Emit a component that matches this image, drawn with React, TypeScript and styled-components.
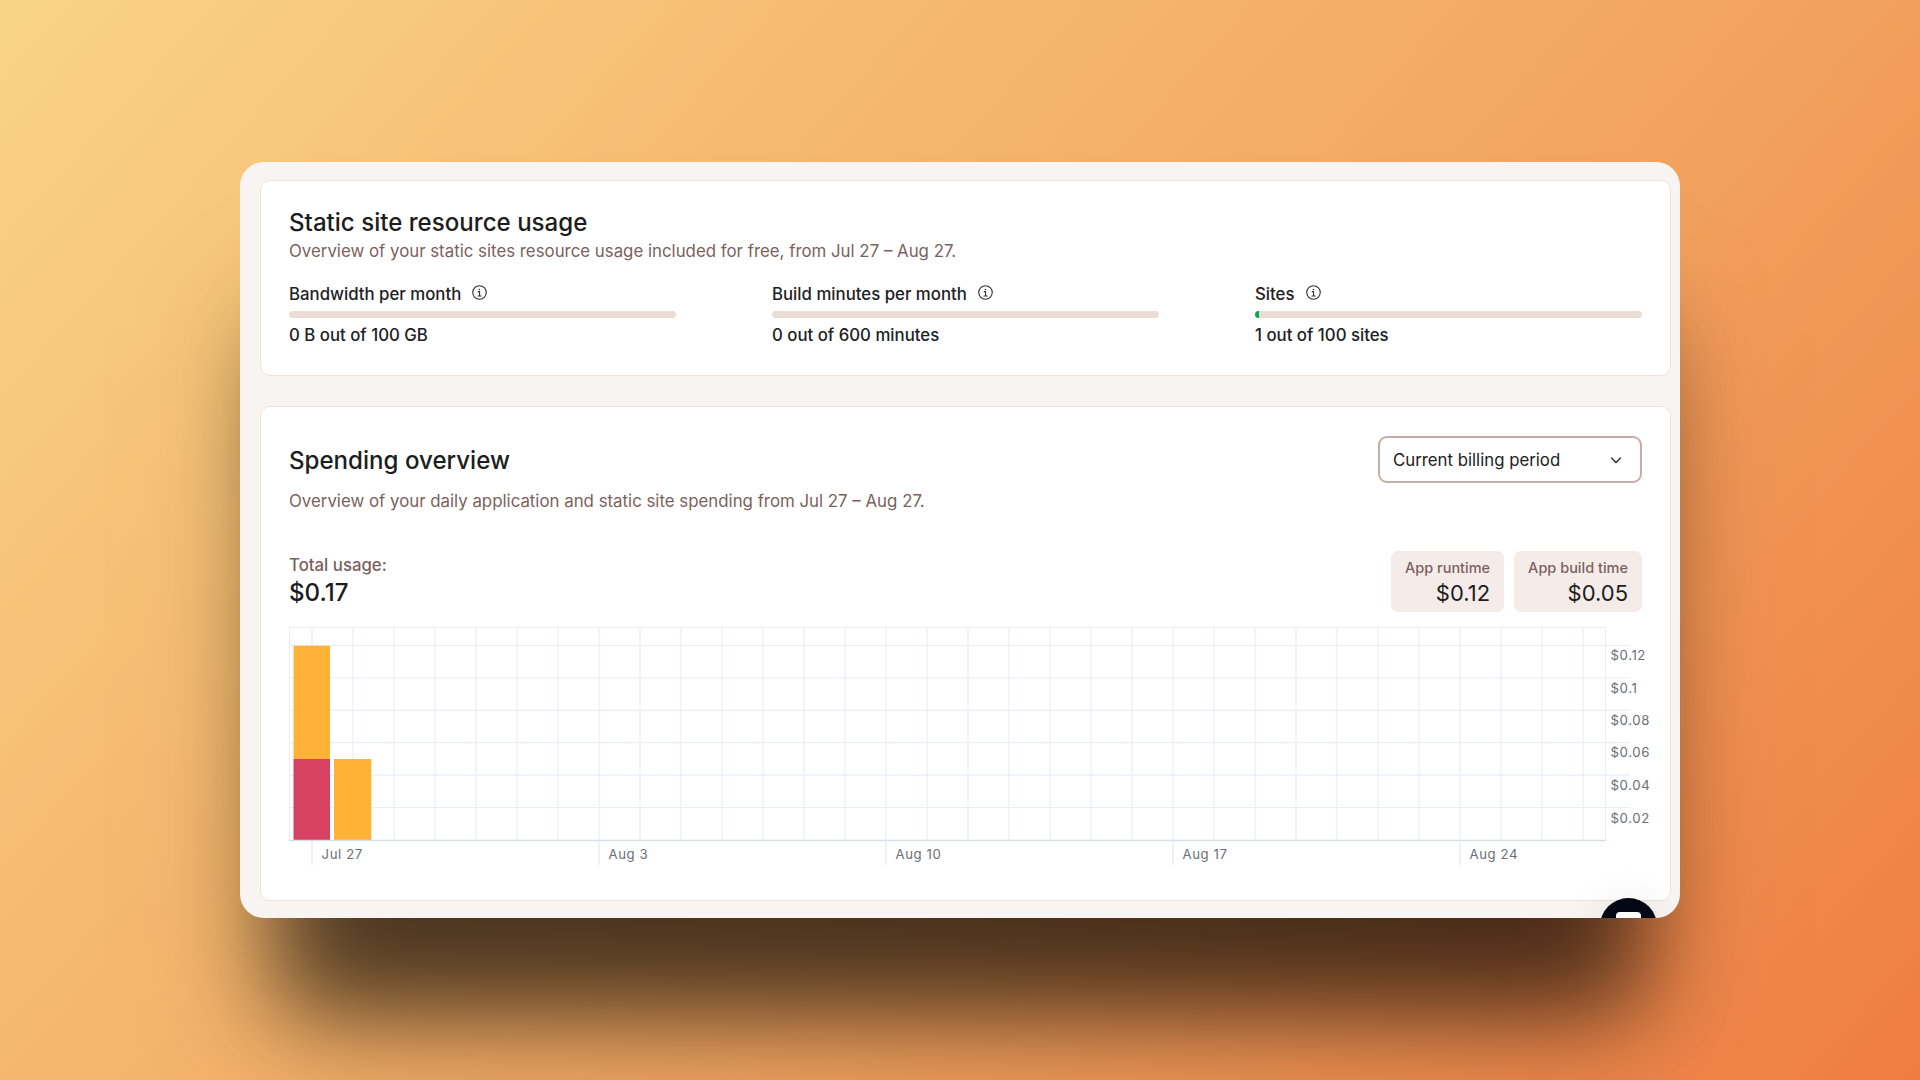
import React from "react";
import styled, { createGlobalStyle } from "styled-components";

const Global = createGlobalStyle`
  html, body { margin: 0; padding: 0; height: 100%; }
  body { font-family: Inter, "Liberation Sans", sans-serif; -webkit-font-smoothing: antialiased; }
  #root { height: 100%; }
`;

const Page = styled.div`
  width: 1920px;
  height: 1080px;
  display: flex;
  align-items: center;
  justify-content: center;
  overflow: hidden;
  background: linear-gradient(132deg, #f9d485 0%, #f5b76e 34%, #f2a35f 62%, #ef7d43 100%);
`;

const Window = styled.main`
  position: relative;
  box-sizing: border-box;
  width: 1440px;
  height: 756px;
  padding: 18px 9px 18px 20px;
  display: flex;
  flex-direction: column;
  gap: 30px;
  border-radius: 24px;
  background: #f8f4f2;
  overflow: hidden;
  box-shadow:
    0 132px 80px -40px rgba(0, 0, 0, 0.42),
    0 128px 120px -45px rgba(0, 0, 0, 0.5);
`;

const Card = styled.section<{ $grow?: boolean }>`
  box-sizing: border-box;
  padding: ${(p) => (p.$grow ? "29px" : "27px")} 28px 28px;
  border: 1px solid #eee3db;
  border-radius: 10px;
  background: #fff;
  flex: ${(p) => (p.$grow ? "1" : "none")};
  display: flex;
  flex-direction: column;
`;

const Title = styled.h2`
  margin: 0;
  padding-top: 2px;
  font-size: 24.1px;
  line-height: 26px;
  font-weight: 500;
  color: #1d1d20;
`;

const Subtitle = styled.p<{ $top: number }>`
  margin: ${(p) => p.$top}px 0 0;
  font-size: 16.83px;
  line-height: 30px;
  color: #7c5f5e;
`;

const UsageGrid = styled.div`
  display: grid;
  grid-template-columns: repeat(3, 1fr);
  gap: 96px;
  margin-top: 16px;
`;

const LabelRow = styled.div`
  display: flex;
  align-items: center;
  gap: 11px;
  height: 24px;
`;

const Label = styled.span`
  font-size: 16.8px;
  font-weight: 500;
  color: #212124;
`;

const InfoSvg = styled.svg`
  width: 15px;
  height: 15px;
  margin-top: -4px;
  color: #2a2a2e;
`;

const Track = styled.div`
  height: 7px;
  margin: 5px 0;
  border-radius: 4px;
  background: #e9ddd5;
  overflow: hidden;
`;

const Fill = styled.div`
  height: 100%;
  background: #0aa84f;
`;

const Value = styled.div`
  font-size: 16.8px;
  line-height: 24px;
  font-weight: 500;
  color: #212124;
`;

const Header = styled.div`
  display: flex;
  align-items: center;
  justify-content: space-between;
`;

const Select = styled.button`
  box-sizing: border-box;
  width: 264px;
  height: 47px;
  padding: 0 17px 0 13px;
  display: flex;
  align-items: center;
  justify-content: space-between;
  border: 2px solid #c3afa7;
  border-radius: 9px;
  background: #fff;
  font-family: inherit;
  font-size: 16.8px;
  color: #212124;
`;

const Totals = styled.div`
  display: flex;
  justify-content: space-between;
  margin-top: 35px;
`;

const TotalBlock = styled.div`
  display: flex;
  flex-direction: column;
  padding-top: 2px;
`;

const TotalLabel = styled.span`
  font-size: 16.8px;
  line-height: 24px;
  font-weight: 500;
  color: #7c5f5e;
`;

const TotalValue = styled.span`
  font-size: 24.1px;
  line-height: 32px;
  font-weight: 500;
  color: #1d1d20;
`;

const Pills = styled.div`
  display: flex;
  gap: 10px;
`;

const Pill = styled.div`
  box-sizing: border-box;
  height: 61px;
  padding: 7px 14px 0;
  display: flex;
  flex-direction: column;
  align-items: flex-end;
  border-radius: 7px;
  background: #f5ece9;
`;

const PillLabel = styled.span`
  font-size: 14.5px;
  line-height: 20px;
  font-weight: 500;
  color: #7c5f5e;
`;

const PillValue = styled.span`
  font-size: 22px;
  line-height: 30px;
  color: #1d1d20;
`;

const Chart = styled.svg`
  display: block;
  width: 1353px;
  height: 245px;
  margin-top: 15px;
  overflow: visible;
  font-family: Inter, "Liberation Sans", sans-serif;
  font-size: 13.2px;
  letter-spacing: 0.6px;
`;

const Chat = styled.div`
  position: absolute;
  left: 1360px;
  top: 736px;
  width: 57px;
  height: 57px;
  border-radius: 50%;
  background: #020814;
  box-shadow: 0 0 40px rgba(0, 0, 0, 0.08);
`;

const ChatGlyph = styled.div`
  position: absolute;
  left: 16px;
  top: 14px;
  width: 25px;
  height: 20px;
  border-radius: 4px;
  background: #fff;
`;

const Info = () => (
  <InfoSvg viewBox="0 0 14 14" fill="none" stroke="currentColor" strokeWidth="1">
    <circle cx="7" cy="7" r="6.3" />
    <path d="M5.800 6.200H7.100V10.200M5.600 10.300H8.500" strokeLinecap="round" strokeLinejoin="round" />
    <circle cx="6.900" cy="4.100" r="0.700" fill="currentColor" stroke="none" />
  </InfoSvg>
);

const usage = [
  { label: "Bandwidth per month", value: "0 B out of 100 GB", pct: 0 },
  { label: "Build minutes per month", value: "0 out of 600 minutes", pct: 0 },
  { label: "Sites", value: "1 out of 100 sites", pct: 1 },
];

const vLines = Array.from({ length: 32 }, (_, i) => 312 + i * 41);
const hLines = [645.5, 678, 710.3, 742.7, 775.2, 807.5];
const ticks = [
  { x: 312, t: "Jul 27" },
  { x: 599, t: "Aug 3" },
  { x: 886, t: "Aug 10" },
  { x: 1173, t: "Aug 17" },
  { x: 1460, t: "Aug 24" },
];
const yLabels = [
  { y: 655, t: "$0.12" },
  { y: 688, t: "$0.1" },
  { y: 720, t: "$0.08" },
  { y: 752.5, t: "$0.06" },
  { y: 785, t: "$0.04" },
  { y: 818, t: "$0.02" },
];

export default function App() {
  return (
    <Page>
      <Global />
      <Window>
        <Card>
          <Title>Static site resource usage</Title>
          <Subtitle $top={0}>Overview of your static sites resource usage included for free, from Jul 27 – Aug 27.</Subtitle>
          <UsageGrid>
            {usage.map((u) => (
              <div key={u.label}>
                <LabelRow>
                  <Label>{u.label}</Label>
                  <Info />
                </LabelRow>
                <Track>{u.pct > 0 && <Fill style={{ width: `${u.pct}%` }} />}</Track>
                <Value>{u.value}</Value>
              </div>
            ))}
          </UsageGrid>
        </Card>
        <Card $grow>
          <Header>
            <Title>Spending overview</Title>
            <Select>
              Current billing period
              <svg width="14" height="14" viewBox="0 0 14 14" fill="none" stroke="#2a2a2e" strokeWidth="1.3" strokeLinecap="round" strokeLinejoin="round">
                <path d="M2.500 5l4.500 4.500L11.500 5" />
              </svg>
            </Select>
          </Header>
          <Subtitle $top={3}>Overview of your daily application and static site spending from Jul 27 – Aug 27.</Subtitle>
          <Totals>
            <TotalBlock>
              <TotalLabel>Total usage:</TotalLabel>
              <TotalValue>$0.17</TotalValue>
            </TotalBlock>
            <Pills>
              <Pill>
                <PillLabel>App runtime</PillLabel>
                <PillValue>$0.12</PillValue>
              </Pill>
              <Pill>
                <PillLabel>App build time</PillLabel>
                <PillValue>$0.05</PillValue>
              </Pill>
            </Pills>
          </Totals>
          <Chart viewBox="289 627 1353 245">
            <rect x="289.500" y="627.500" width="1316" height="213" fill="#fff" stroke="#e9edf4" />
            {vLines.map((x) => (
              <line key={x} x1={x} x2={x} y1="627" y2="840" stroke="#e8eef6" strokeWidth="1.2" />
            ))}
            {hLines.map((y) => (
              <line key={y} x1="289" x2="1630" y1={y} y2={y} stroke="#e8eef6" strokeWidth="1.2" />
            ))}
            <rect x="293.500" y="645.700" width="36.500" height="113.300" fill="#ffb238" />
            <rect x="293.500" y="759" width="36.500" height="81" fill="#d74162" />
            <rect x="334" y="759" width="37.300" height="81" fill="#ffb238" />
            <line x1="289" x2="1606" y1="840.500" y2="840.500" stroke="#d8dee8" strokeWidth="1.500" />
            {ticks.map(({ x, t }) => (
              <g key={t}>
                <line x1={x} x2={x} y1="840" y2="865" stroke="#e6e8ec" strokeWidth="1.2" />
                <text x={x + 9.500} y="858.500" fill="#6b6f76">{t}</text>
              </g>
            ))}
            {yLabels.map(({ y, t }) => (
              <text key={t} x="1610.500" y={y + 4.700} fill="#6b6f76">{t}</text>
            ))}
          </Chart>
        </Card>
        <Chat>
          <ChatGlyph />
        </Chat>
      </Window>
    </Page>
  );
}
